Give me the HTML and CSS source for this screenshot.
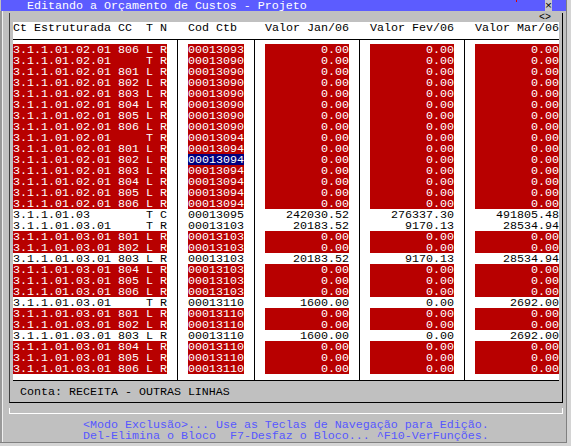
FILE: index.html
```html
<!DOCTYPE html>
<html lang="pt">
<head>
<meta charset="utf-8">
<title>Editando a Orçamento de Custos - Projeto</title>
<link rel="stylesheet" href="styles.css">
</head>
<body>
<div class="win">
  <div class="title"><span class="title-text">Editando a Orçamento de Custos - Projeto</span><span class="close">×</span></div>
  <div class="client">
    <div class="box">
      <div class="strip"><span class="arrows">&lt;&gt;</span></div>
      <div class="panel">
        <div class="row head"><span>Ct Estruturada CC  T N</span><span>Cod Ctb</span><span>Valor Jan/06</span><span>Valor Fev/06</span><span>Valor Mar/06</span></div>
        <div class="tbody">
          <div class="row red"><span>3.1.1.01.02.01 806 L R</span><span>00013093</span><span>0.00</span><span>0.00</span><span>0.00</span></div>
          <div class="row red"><span>3.1.1.01.02.01     T R</span><span>00013090</span><span>0.00</span><span>0.00</span><span>0.00</span></div>
          <div class="row red"><span>3.1.1.01.02.01 801 L R</span><span>00013090</span><span>0.00</span><span>0.00</span><span>0.00</span></div>
          <div class="row red"><span>3.1.1.01.02.01 802 L R</span><span>00013090</span><span>0.00</span><span>0.00</span><span>0.00</span></div>
          <div class="row red"><span>3.1.1.01.02.01 803 L R</span><span>00013090</span><span>0.00</span><span>0.00</span><span>0.00</span></div>
          <div class="row red"><span>3.1.1.01.02.01 804 L R</span><span>00013090</span><span>0.00</span><span>0.00</span><span>0.00</span></div>
          <div class="row red"><span>3.1.1.01.02.01 805 L R</span><span>00013090</span><span>0.00</span><span>0.00</span><span>0.00</span></div>
          <div class="row red"><span>3.1.1.01.02.01 806 L R</span><span>00013090</span><span>0.00</span><span>0.00</span><span>0.00</span></div>
          <div class="row red"><span>3.1.1.01.02.01     T R</span><span>00013094</span><span>0.00</span><span>0.00</span><span>0.00</span></div>
          <div class="row red"><span>3.1.1.01.02.01 801 L R</span><span>00013094</span><span>0.00</span><span>0.00</span><span>0.00</span></div>
          <div class="row red"><span>3.1.1.01.02.01 802 L R</span><span class="sel">00013094</span><span>0.00</span><span>0.00</span><span>0.00</span></div>
          <div class="row red"><span>3.1.1.01.02.01 803 L R</span><span>00013094</span><span>0.00</span><span>0.00</span><span>0.00</span></div>
          <div class="row red"><span>3.1.1.01.02.01 804 L R</span><span>00013094</span><span>0.00</span><span>0.00</span><span>0.00</span></div>
          <div class="row red"><span>3.1.1.01.02.01 805 L R</span><span>00013094</span><span>0.00</span><span>0.00</span><span>0.00</span></div>
          <div class="row red"><span>3.1.1.01.02.01 806 L R</span><span>00013094</span><span>0.00</span><span>0.00</span><span>0.00</span></div>
          <div class="row"><span>3.1.1.01.03        T C</span><span>00013095</span><span>242030.52</span><span>276337.30</span><span>491805.48</span></div>
          <div class="row"><span>3.1.1.01.03.01     T R</span><span>00013103</span><span>20183.52</span><span>9170.13</span><span>28534.94</span></div>
          <div class="row red"><span>3.1.1.01.03.01 801 L R</span><span>00013103</span><span>0.00</span><span>0.00</span><span>0.00</span></div>
          <div class="row red"><span>3.1.1.01.03.01 802 L R</span><span>00013103</span><span>0.00</span><span>0.00</span><span>0.00</span></div>
          <div class="row"><span>3.1.1.01.03.01 803 L R</span><span>00013103</span><span>20183.52</span><span>9170.13</span><span>28534.94</span></div>
          <div class="row red"><span>3.1.1.01.03.01 804 L R</span><span>00013103</span><span>0.00</span><span>0.00</span><span>0.00</span></div>
          <div class="row red"><span>3.1.1.01.03.01 805 L R</span><span>00013103</span><span>0.00</span><span>0.00</span><span>0.00</span></div>
          <div class="row red"><span>3.1.1.01.03.01 806 L R</span><span>00013103</span><span>0.00</span><span>0.00</span><span>0.00</span></div>
          <div class="row"><span>3.1.1.01.03.01     T R</span><span>00013110</span><span>1600.00</span><span>0.00</span><span>2692.00</span></div>
          <div class="row red"><span>3.1.1.01.03.01 801 L R</span><span>00013110</span><span>0.00</span><span>0.00</span><span>0.00</span></div>
          <div class="row red"><span>3.1.1.01.03.01 802 L R</span><span>00013110</span><span>0.00</span><span>0.00</span><span>0.00</span></div>
          <div class="row"><span>3.1.1.01.03.01 803 L R</span><span>00013110</span><span>1600.00</span><span>0.00</span><span>2692.00</span></div>
          <div class="row red"><span>3.1.1.01.03.01 804 L R</span><span>00013110</span><span>0.00</span><span>0.00</span><span>0.00</span></div>
          <div class="row red"><span>3.1.1.01.03.01 805 L R</span><span>00013110</span><span>0.00</span><span>0.00</span><span>0.00</span></div>
          <div class="row red"><span>3.1.1.01.03.01 806 L R</span><span>00013110</span><span>0.00</span><span>0.00</span><span>0.00</span></div>
        </div>
      </div>
      <div class="conta">Conta: RECEITA - OUTRAS LINHAS</div>
    </div>
    <div class="bracket"></div>
    <div class="help">
      <div class="help-line">&lt;Modo Exclusão&gt;... Use as Teclas de Navegação para Edição.</div>
      <div class="help-line">Del-Elimina o Bloco  F7-Desfaz o Bloco... ^F10-VerFunções.</div>
    </div>
  </div>
</div>
<span class="tick"></span>
</body>
</html>
```

FILE: styles.css
```css
html, body {
  margin: 0;
  padding: 0;
}

body {
  width: 571px;
  height: 446px;
  overflow: hidden;
  background: #d4d4d4;
  position: relative;
  font-family: "Liberation Mono", "DejaVu Sans Mono", monospace;
  font-size: 11.67px;
  color: #000;
}

.win {
  width: 567px;
  height: 443px;
  box-sizing: border-box;
  border-right: 1px solid #808080;
  border-bottom: 1px solid #808080;
  background: #c0c0c0;
  display: flex;
  flex-direction: column;
}

.title {
  height: 11px;
  margin-left: 1px;
  background: #5c5cff;
  color: #fff;
  display: flex;
  line-height: 9px;
  white-space: pre;
  flex: none;
}

.title-text {
  flex: 1;
  padding: 2px 0 0 26px;
}

.close {
  width: 7px;
  margin-right: 14px;
  padding-top: 2px;
  background: #c8c8c8;
  color: #000;
  text-align: center;
}

.client {
  flex: 1;
  display: flex;
  flex-direction: column;
  border-left: 2px solid #9a9a9a;
  box-shadow: inset 1px 0 #f0f0f0;
}

.box {
  margin: 2px 0 0 7px;
  width: 554px;
  box-sizing: border-box;
  border: 1px solid #000;
  border-top: 0;
  border-left-color: #404040;
  padding-bottom: 5px;
}

.strip {
  height: 9px;
  display: flex;
  justify-content: flex-end;
  padding-right: 11px;
  font-size: 10px;
  line-height: 9px;
}

.panel {
  margin: 0 3px;
  background: #fff;
}

.row {
  display: grid;
  grid-template-columns: 154px 56px 84px 84px 84px;
  grid-template-rows: 11px;
  column-gap: 21px;
  height: 11px;
  line-height: 9px;
  white-space: pre;
}

.row > span {
  padding-top: 2px;
}

.row > span:nth-child(n+3) {
  text-align: right;
}

.head > span:nth-child(n+3) {
  text-align: left;
}

.tbody {
  margin: 6px 0 5px;
  padding: 4px 0 6px;
  border-top: 1px solid #000;
  border-bottom: 1px solid #000;
  background:
    linear-gradient(#000, #000) 164px 0 / 1px 100% no-repeat,
    linear-gradient(#000, #000) 241px 0 / 1px 100% no-repeat,
    linear-gradient(#000, #000) 346px 0 / 1px 100% no-repeat,
    linear-gradient(#000, #000) 451px 0 / 1px 100% no-repeat;
}

.red > span {
  background: #b80000;
  color: #fff;
}

.red > span.sel {
  background: #000080;
}

.conta {
  height: 11px;
  box-sizing: border-box;
  padding: 2px 0 0 10px;
  line-height: 9px;
  white-space: pre;
}

.bracket {
  margin: 5px 0 0 7px;
  width: 554px;
  height: 6px;
  box-sizing: border-box;
  border: 1px solid #fff;
  border-top: 0;
}

.help {
  margin-top: 5px;
  padding-left: 81px;
  color: #5757ff;
}

.help-line {
  height: 11px;
  box-sizing: border-box;
  padding-top: 2px;
  line-height: 9px;
  white-space: pre;
}

.tick {
  position: absolute;
  left: 516px;
  top: 0;
  width: 1px;
  height: 2px;
  background: #e00000;
}
```
